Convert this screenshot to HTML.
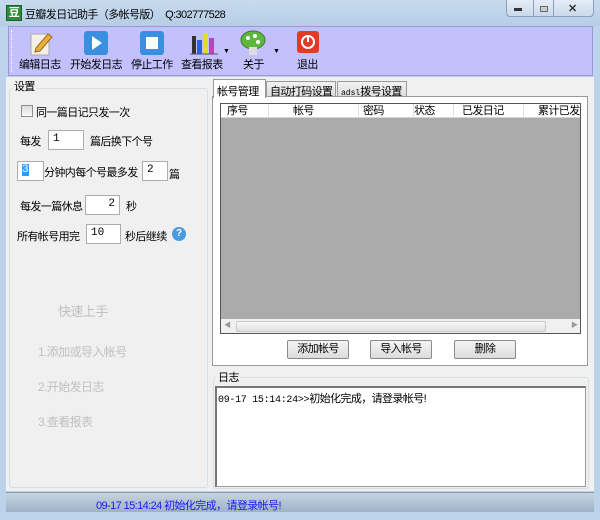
<!DOCTYPE html>
<html><head><meta charset="utf-8"><style>
*{margin:0;padding:0;box-sizing:border-box}
body{width:600px;height:520px;overflow:hidden;background:#bcd3eb;font-family:"Liberation Sans","Noto Sans CJK SC",sans-serif;font-size:11px;letter-spacing:-0.6px;color:#000;position:relative}
div{white-space:nowrap}
.a{position:absolute}
.inp{position:absolute;background:#fff;border:1px solid #abadb3;height:20px;font-size:11px;padding:2px 4px;font-family:"Liberation Mono",monospace;letter-spacing:0}
.btn{position:absolute;height:19px;border:1px solid #8a8a8a;border-radius:2px;background:linear-gradient(#f4f4f4,#dcdcdc);text-align:center;line-height:17px}
.tb{position:absolute;top:56px}
.hd{position:absolute;top:0;height:14px;line-height:14px;font-size:11px;border-right:1px solid #e0e0e0}
.gray{color:#c0c0c0}
</style></head><body>
<div class="a" style="left:0;top:0;width:600px;height:26px;background:linear-gradient(#c7dbef,#b6cde6)"></div>
<div class="a" style="left:6px;top:5px;width:16px;height:16px;background:#2f8a3c;border:1px solid #1a5f25;color:#fff;font-size:11px;line-height:14px;text-align:center;font-weight:bold">豆</div>
<div class="a" style="left:25px;top:6px">豆瓣发日记助手（多帐号版）&nbsp;&nbsp;Q:302777528</div>
<div class="a" style="left:506px;top:0;width:88px;height:17px;border:1px solid #8aa0b8;border-top:none;background:linear-gradient(#e4edf6,#c9d9ea);border-radius:0 0 4px 4px"></div>
<div class="a" style="left:533px;top:0;width:1px;height:17px;background:#8aa0b8"></div>
<div class="a" style="left:553px;top:0;width:1px;height:17px;background:#8aa0b8"></div>
<div class="a" style="left:514px;top:8px;width:8px;height:3px;background:#333"></div>
<div class="a" style="left:540px;top:6px;width:8px;height:6px;border:1px solid #666;background:#ccc"></div>
<div class="a" style="left:568px;top:2px;font-size:11px;font-weight:bold;color:#333">✕</div>
<div class="a" style="left:8px;top:26px;width:585px;height:50px;background:#c3c0fe;border:1px solid #9a98d8"></div>
<div class="a" style="left:11px;top:30px;width:1px;height:42px;border-left:1px dotted #fff"></div>
<svg class="a" style="left:28px;top:30px" width="26" height="26"><rect x="3" y="4" width="18" height="21" fill="#f4f0e4" stroke="#aaa"/><path d="M8 18 L20 4 L24 7 L12 21 L7 22Z" fill="#e8b040" stroke="#9a6a10"/></svg>
<svg class="a" style="left:84px;top:31px" width="24" height="24"><rect x="0" y="0" width="24" height="24" rx="3" fill="#3a8fe0"/><path d="M8 5 L18 12 L8 19Z" fill="#fff"/></svg>
<svg class="a" style="left:140px;top:31px" width="24" height="24"><rect x="0" y="0" width="24" height="24" rx="3" fill="#3a8fe0"/><rect x="6" y="6" width="12" height="12" fill="#fff"/></svg>
<svg class="a" style="left:190px;top:30px" width="28" height="26"><rect x="2" y="6" width="4" height="18" fill="#333"/><rect x="7" y="10" width="5" height="14" fill="#3060e0"/><rect x="13" y="4" width="5" height="20" fill="#e0e020"/><rect x="19" y="8" width="5" height="16" fill="#c040c0"/><path d="M0 24 L28 24" stroke="#555"/></svg>
<div class="a" style="left:223px;top:48px;font-size:7px">▼</div>
<svg class="a" style="left:240px;top:30px" width="26" height="26"><ellipse cx="13" cy="10" rx="12" ry="9" fill="#5cb83c" stroke="#3c7a2a"/><circle cx="8" cy="8" r="2" fill="#fff"/><circle cx="15" cy="6" r="2" fill="#fff"/><circle cx="18" cy="12" r="2" fill="#fff"/><rect x="9" y="17" width="8" height="8" fill="#ddd"/></svg>
<div class="a" style="left:273px;top:48px;font-size:7px">▼</div>
<svg class="a" style="left:297px;top:31px" width="22" height="22"><rect x="0" y="0" width="22" height="22" rx="3" fill="#e23a24"/><circle cx="11" cy="11" r="6" fill="none" stroke="#fff" stroke-width="2"/><path d="M11 4 L11 11" stroke="#fff" stroke-width="2"/></svg>
<div class="tb" style="left:19px">编辑日志</div>
<div class="tb" style="left:70px">开始发日志</div>
<div class="tb" style="left:131px">停止工作</div>
<div class="tb" style="left:181px">查看报表</div>
<div class="tb" style="left:243px">关于</div>
<div class="tb" style="left:297px">退出</div>
<div class="a" style="left:6px;top:77px;width:588px;height:414px;background:#f0f0f0"></div>
<div class="a" style="left:9px;top:88px;width:199px;height:400px;border:1px solid #d5dfe5;border-radius:3px"></div>
<div class="a" style="left:12px;top:78px;background:#f0f0f0;padding:0 2px">设置</div>
<div class="a" style="left:21px;top:105px;width:12px;height:12px;border:1px solid #8e8f8f;background:linear-gradient(#ddd,#fafafa)"></div>
<div class="a" style="left:36px;top:104px">同一篇日记只发一次</div>
<div class="a" style="left:20px;top:133px">每发</div>
<div class="inp" style="left:48px;top:130px;width:36px">1</div>
<div class="a" style="left:90px;top:133px">篇后换下个号</div>
<div class="inp" style="left:17px;top:161px;width:27px"><span style="background:#3399ff;color:#fff">3</span></div>
<div class="a" style="left:44px;top:164px">分钟内每个号最多发</div>
<div class="inp" style="left:142px;top:161px;width:26px">2</div>
<div class="a" style="left:169px;top:166px">篇</div>
<div class="a" style="left:20px;top:198px">每发一篇休息</div>
<div class="inp" style="left:85px;top:195px;width:35px;text-align:right">2</div>
<div class="a" style="left:126px;top:198px">秒</div>
<div class="a" style="left:17px;top:228px">所有帐号用完</div>
<div class="inp" style="left:86px;top:224px;width:35px">10</div>
<div class="a" style="left:125px;top:228px">秒后继续</div>
<div class="a" style="left:172px;top:227px;width:14px;height:14px;border-radius:50%;background:#4a9ae0;color:#fff;font-size:10px;font-weight:bold;text-align:center;line-height:14px;letter-spacing:0">?</div>
<div class="a gray" style="left:58px;top:301px;font-size:13px">快速上手</div>
<div class="a gray" style="left:38px;top:343px;font-size:12px">1.添加或导入帐号</div>
<div class="a gray" style="left:38px;top:378px;font-size:12px">2.开始发日志</div>
<div class="a gray" style="left:38px;top:413px;font-size:12px">3.查看报表</div>
<div class="a" style="left:212px;top:96px;width:376px;height:270px;background:#fff;border:1px solid #9a9a9a"></div>
<div class="a" style="left:213px;top:79px;width:53px;height:19px;background:#fff;border:1px solid #9a9a9a;border-bottom:none;padding:3px 3px">帐号管理</div>
<div class="a" style="left:266px;top:81px;width:70px;height:16px;background:linear-gradient(#f2f2f2,#dedede);border:1px solid #9a9a9a;padding:1px 3px">自动打码设置</div>
<div class="a" style="left:337px;top:81px;width:70px;height:16px;background:linear-gradient(#f2f2f2,#dedede);border:1px solid #9a9a9a;padding:1px 3px"><span style="font-size:8px;font-family:'Liberation Mono',monospace;letter-spacing:0">adsl</span>拨号设置</div>
<div class="a" style="left:220px;top:103px;width:361px;height:231px;border:1px solid #555;background:#ababab;overflow:hidden">
 <div class="a" style="left:0;top:0;width:360px;height:14px;background:#fff;border-bottom:1px solid #d5d5d5"></div>
 <div class="hd" style="left:0;width:48px;padding-left:6px">序号</div>
 <div class="hd" style="left:48px;width:90px;padding-left:24px">帐号</div>
 <div class="hd" style="left:138px;width:55px;padding-left:4px">密码</div>
 <div class="hd" style="left:193px;width:40px;padding-left:0">状态</div>
 <div class="hd" style="left:233px;width:70px;padding-left:8px">已发日记</div>
 <div class="hd" style="left:303px;width:80px;padding-left:14px">累计已发</div>
 <div class="a" style="left:0;top:215px;width:360px;height:15px;background:#f0f0f0"></div>
 <div class="a" style="left:15px;top:217px;width:310px;height:11px;background:linear-gradient(#f8f8f8,#e0e0e0);border:1px solid #c8c8c8;border-radius:2px"></div>
 <div class="a" style="left:3px;top:216px;font-size:7px;color:#999">◀</div>
 <div class="a" style="left:350px;top:216px;font-size:7px;color:#999">▶</div>
</div>
<div class="btn" style="left:287px;top:340px;width:62px">添加帐号</div>
<div class="btn" style="left:370px;top:340px;width:62px">导入帐号</div>
<div class="btn" style="left:454px;top:340px;width:62px">删除</div>
<div class="a" style="left:213px;top:377px;width:376px;height:112px;border:1px solid #d5dfe5;border-radius:3px"></div>
<div class="a" style="left:216px;top:369px;background:#f0f0f0;padding:0 2px">日志</div>
<div class="a" style="left:215px;top:386px;width:371px;height:101px;background:#fff;border:1px solid #999;border-left:2px solid #777;border-top:2px solid #777;padding:2px 1px"><span style="font-family:'Liberation Mono',monospace;font-size:10px;letter-spacing:-0.3px">09-17 15:14:24&gt;&gt;</span>初始化完成，请登录帐号!</div>
<div class="a" style="left:6px;top:492px;width:588px;height:20px;background:linear-gradient(#c6d4e2,#9fb2c6);border-top:1px solid #8899aa"></div>
<div class="a" style="left:96px;top:497px;color:#1a1aee;font-size:11px">09-17 15:14:24 初始化完成，请登录帐号!</div>
</body></html>
